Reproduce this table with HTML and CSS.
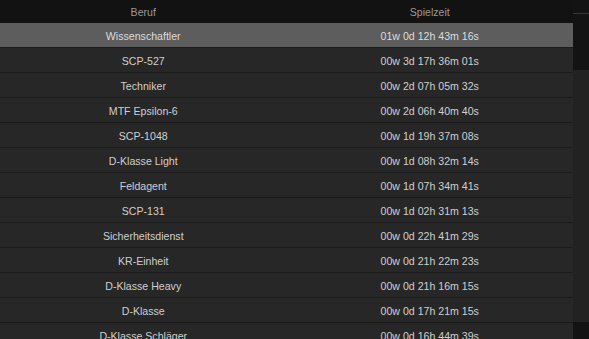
FILE: index.html
```html
<!DOCTYPE html>
<html>
<head>
<meta charset="utf-8">
<link rel="stylesheet" href="styles.css">
</head>
<body>
<div class="wrap">
  <div class="table">
    <div class="head">
      <div class="cell">Beruf</div>
      <div class="cell">Spielzeit</div>
    </div>
    <div class="row sel"><div class="cell">Wissenschaftler</div><div class="cell">01w 0d 12h 43m 16s</div></div>
    <div class="row"><div class="cell">SCP-527</div><div class="cell">00w 3d 17h 36m 01s</div></div>
    <div class="row"><div class="cell">Techniker</div><div class="cell">00w 2d 07h 05m 32s</div></div>
    <div class="row"><div class="cell">MTF Epsilon-6</div><div class="cell">00w 2d 06h 40m 40s</div></div>
    <div class="row"><div class="cell">SCP-1048</div><div class="cell">00w 1d 19h 37m 08s</div></div>
    <div class="row"><div class="cell">D-Klasse Light</div><div class="cell">00w 1d 08h 32m 14s</div></div>
    <div class="row"><div class="cell">Feldagent</div><div class="cell">00w 1d 07h 34m 41s</div></div>
    <div class="row"><div class="cell">SCP-131</div><div class="cell">00w 1d 02h 31m 13s</div></div>
    <div class="row"><div class="cell">Sicherheitsdienst</div><div class="cell">00w 0d 22h 41m 29s</div></div>
    <div class="row"><div class="cell">KR-Einheit</div><div class="cell">00w 0d 21h 22m 23s</div></div>
    <div class="row"><div class="cell">D-Klasse Heavy</div><div class="cell">00w 0d 21h 16m 15s</div></div>
    <div class="row"><div class="cell">D-Klasse</div><div class="cell">00w 0d 17h 21m 15s</div></div>
    <div class="row"><div class="cell">D-Klasse Schläger</div><div class="cell">00w 0d 16h 44m 39s</div></div>
  </div>
  <div class="scroll">
    <div class="scroll-top"></div>
    <div class="scroll-line"></div>
    <div class="scroll-gap"></div>
    <div class="thumb"></div>
  </div>
</div>
</body>
</html>
```

FILE: styles.css
```css
html, body {
  margin: 0;
  padding: 0;
  background: #131313;
  overflow: hidden;
}
.wrap {
  display: flex;
  width: 589px;
  height: 339px;
  overflow: hidden;
  font-family: "Liberation Sans", Arial, sans-serif;
  font-size: 10.6px;
}
.table {
  width: 573px;
  flex: none;
  display: flex;
  flex-direction: column;
}
.head, .row {
  display: grid;
  grid-template-columns: 1fr 1fr;
  flex: none;
}
.head {
  height: 23px;
  background: #121212;
  color: #9a9a9a;
}
.row {
  height: 24px;
  background: #272727;
  border-bottom: 1px solid #1c1c1c;
  color: #cfcfcf;
}
.row.sel {
  background: #5c5d5c;
  color: #dcdcdc;
}
.cell {
  display: flex;
  align-items: center;
  justify-content: center;
  white-space: nowrap;
  padding-top: 1px;
}
.head .cell {
  padding-top: 0;
}
.scroll {
  width: 16px;
  flex: none;
  display: flex;
  flex-direction: column;
  background: #131313;
}
.scroll-top { height: 13px; }
.scroll-line { height: 1px; background: #363636; }
.scroll-gap { height: 56px; }
.thumb { height: 252px; background: #222222; }
```
